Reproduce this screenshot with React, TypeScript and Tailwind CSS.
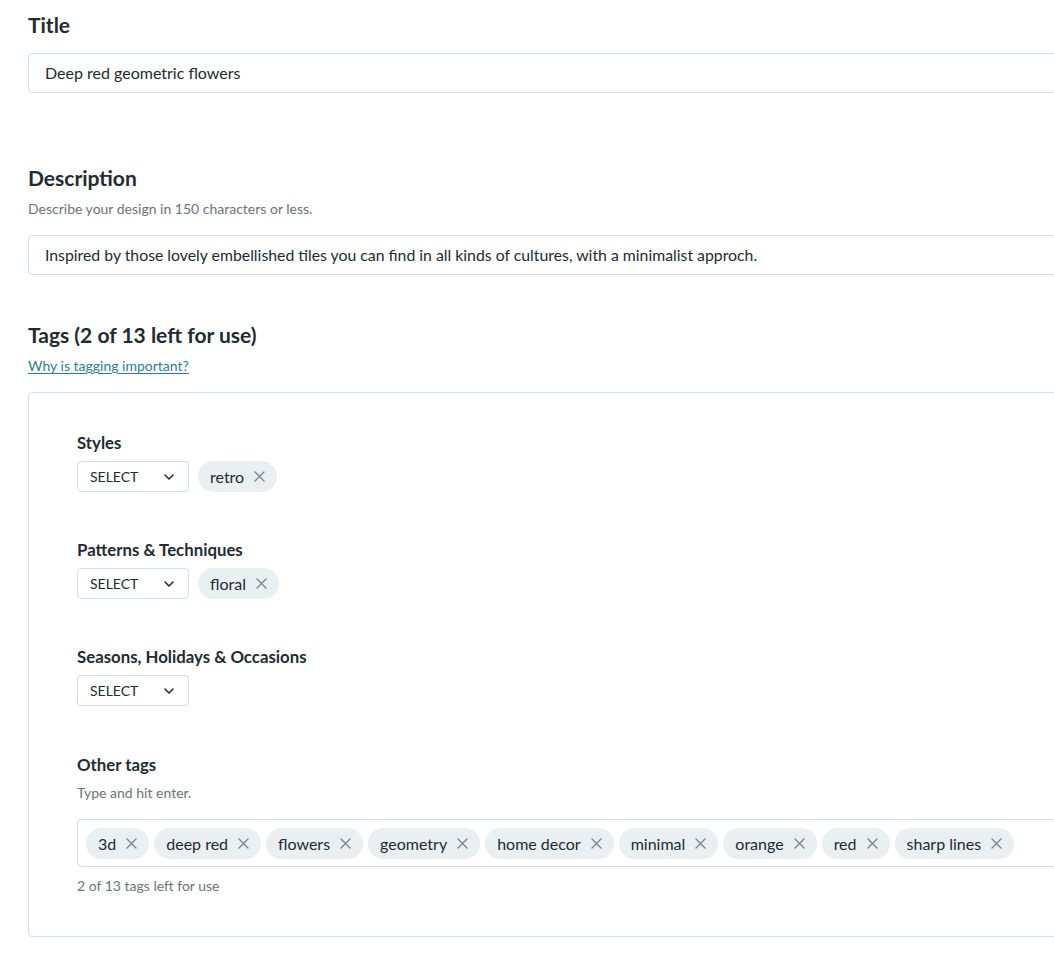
import React from "react";

const XIcon = () => (
  <svg width="11" height="11" viewBox="0 0 11 11" className="shrink-0">
    <path d="M1 1L10 10M10 1L1 10" stroke="#7d858b" strokeWidth="1.4" strokeLinecap="round" />
  </svg>
);

const Chevron = () => (
  <svg width="10" height="6" viewBox="0 0 10 6">
    <path d="M1 1L5 5L9 1" stroke="#222b31" strokeWidth="1.6" fill="none" strokeLinecap="round" strokeLinejoin="round" />
  </svg>
);

const Chip = ({ label }: { label: string }) => (
  <div className="flex h-[31px] items-center gap-[10px] rounded-full bg-[#eaeff1] pl-[12px] pr-[12px] text-[16px] text-[#222b31]">
    <span className="pt-[1px]">{label}</span>
    <XIcon />
  </div>
);

const Select = () => (
  <div className="flex h-[31px] w-[112px] items-center justify-between rounded-[4px] border border-[#d3dfe2] bg-white pl-[12px] pr-[14px] text-[14px] text-[#222b31]">
    <span>SELECT</span>
    <Chevron />
  </div>
);

const Group = ({ label, chip, first }: { label: string; chip?: string; first?: boolean }) => (
  <div className={first ? "" : "mt-[47px]"}>
    <div className="text-[16.8px] font-bold leading-[22px] text-[#222b31]">{label}</div>
    <div className="mt-[7px] flex items-center gap-[9px]">
      <Select />
      {chip && <Chip label={chip} />}
    </div>
  </div>
);

export default function App() {
  const tags = ["3d", "deep red", "flowers", "geometry", "home decor", "minimal", "orange", "red", "sharp lines"];
  return (
    <div
      className="w-[1054px] h-[954px] overflow-hidden bg-white text-[#222b31]"
      style={{ fontFamily: "Lato, 'Noto Sans', sans-serif" }}
    >
      <div className="w-[1100px] pl-[28px] pt-[13px]">
        <div className="text-[21px] font-bold leading-[24px]">Title</div>
        <div className="mt-[16px] flex h-[40px] items-center rounded-[4px] border border-[#d3dfe2] pl-[16px] text-[16px]">
          Deep red geometric flowers
        </div>

        <div className="mt-[73px] text-[21px] font-bold leading-[24px]">Description</div>
        <div className="mt-[10px] text-[14px] leading-[18px] text-[#6b7378]">
          Describe your design in 150 characters or less.
        </div>
        <div className="mt-[17px] flex h-[40px] items-center rounded-[4px] border border-[#d3dfe2] pl-[16px] text-[15.8px]">
          Inspired by those lovely embellished tiles you can find in all kinds of cultures, with a minimalist approch.
        </div>

        <div className="mt-[48px] text-[21px] font-bold leading-[24px]">Tags (2 of 13 left for use)</div>
        <div className="mt-[10px] text-[14px] leading-[18px]">
          <a className="text-[#2a7f8c] underline underline-offset-2">Why is tagging important?</a>
        </div>

        <div className="mt-[17px] rounded-[4px] border border-[#d3dfe2] pb-[41px] pl-[48px] pt-[39px]">
          <Group label="Styles" chip="retro" first />
          <Group label="Patterns & Techniques" chip="floral" />
          <Group label="Seasons, Holidays & Occasions" />

          <div className="mt-[48px]">
            <div className="text-[16.8px] font-bold leading-[22px]">Other tags</div>
            <div className="mt-[8px] text-[14px] leading-[18px] text-[#6b7378]">Type and hit enter.</div>
            <div className="mt-[17px] flex h-[48px] items-center gap-[5px] rounded-[4px] border border-[#d3dfe2] pl-[8px]">
              {tags.map((t) => (
                <Chip key={t} label={t} />
              ))}
            </div>
            <div className="mt-[10px] text-[14px] leading-[18px] text-[#6b7378]">2 of 13 tags left for use</div>
          </div>
        </div>
      </div>
    </div>
  );
}
